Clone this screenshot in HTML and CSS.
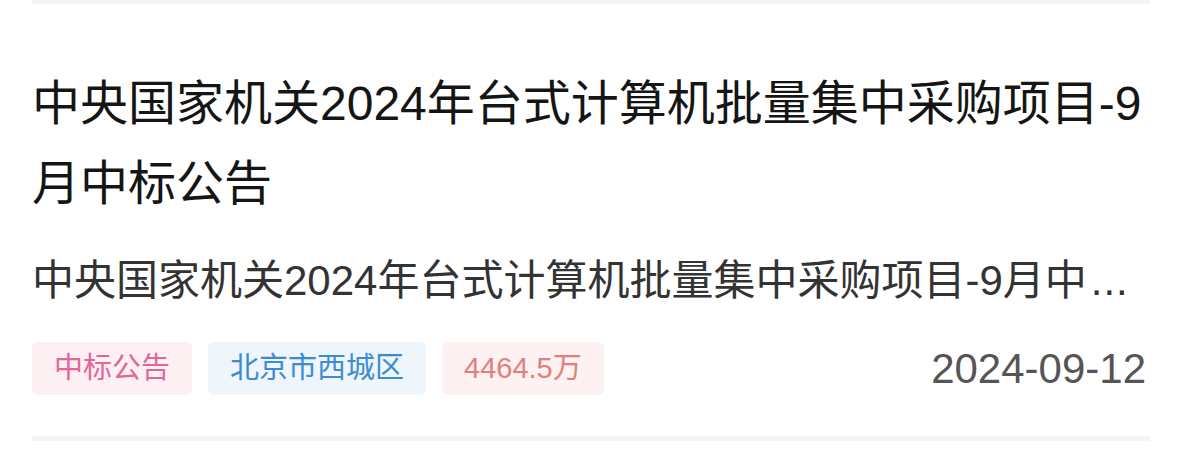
FILE: index.html
```html
<!DOCTYPE html>
<html lang="zh-CN">
<head>
<meta charset="utf-8">
<title>中标公告</title>
<link rel="stylesheet" href="styles.css">
</head>
<body>
<div class="card">
  <div class="divider"></div>
  <h1 class="title">中央国家机关2024年台式计算机批量集中采购项目-9月中标公告</h1>
  <p class="summary">中央国家机关2024年台式计算机批量集中采购项目-9月中<span class="dots">...</span></p>
  <div class="meta">
    <div class="tags">
      <span class="tag tag-type">中标公告</span>
      <span class="tag tag-area">北京市西城区</span>
      <span class="tag tag-money">4464.5万</span>
    </div>
    <span class="date">2024-09-12</span>
  </div>
  <div class="divider divider-bottom"></div>
</div>
</body>
</html>
```

FILE: styles.css
```css
html, body {
  margin: 0;
  padding: 0;
  background: #ffffff;
}
body {
  font-family: "Liberation Sans", "Noto Sans CJK SC", sans-serif;
}
.card {
  padding: 0 29px 0 32px;
  width: 1179px;
  box-sizing: border-box;
}
.divider {
  height: 4px;
  background: #f4f4f4;
}
.divider-bottom {
  margin-top: 41px;
  height: 5px;
}
.title {
  margin: 60px 0 0 0;
  font-size: 48px;
  line-height: 80px;
  font-weight: 400;
  color: #151515;
}
.summary {
  margin: 29px 0 0 0;
  font-size: 42px;
  line-height: 56px;
  color: #333333;
  white-space: nowrap;
}
.dots {
  margin-left: 4px;
  letter-spacing: 1px;
}
.meta {
  margin-top: 33px;
  height: 53px;
  display: flex;
  align-items: center;
  justify-content: space-between;
}
.tags {
  display: flex;
  gap: 16px;
}
.tag {
  height: 53px;
  line-height: 53px;
  padding: 0 22px;
  font-size: 29px;
  border-radius: 6px;
}
.tag-type {
  background: #fdf0f3;
  color: #e2669c;
}
.tag-area {
  background: #eef5fb;
  color: #3d8bd0;
}
.tag-money {
  background: #fdf1f1;
  color: #e0807e;
}
.date {
  font-size: 42px;
  line-height: 53px;
  color: #555555;
  margin-right: 4px;
}
```
